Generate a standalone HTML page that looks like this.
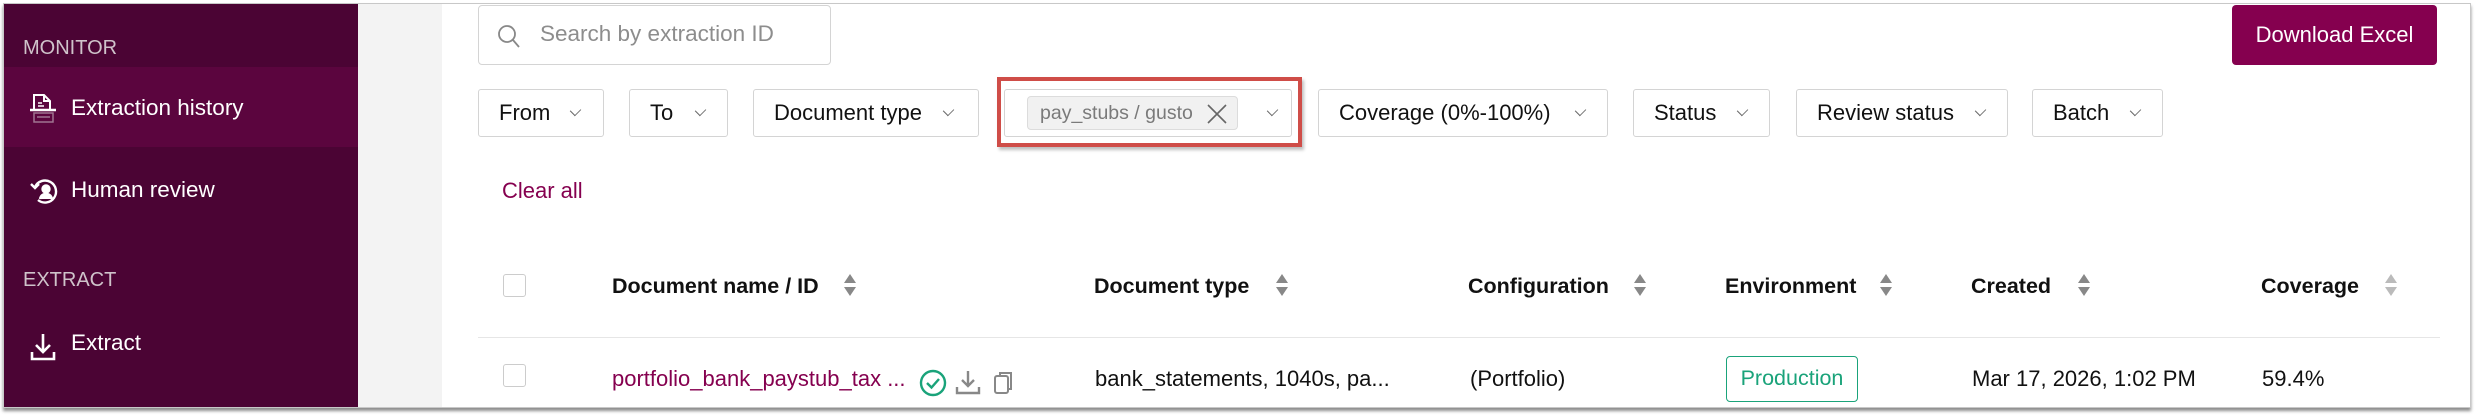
<!DOCTYPE html>
<html><head><meta charset="utf-8"><style>
*{box-sizing:border-box;margin:0;padding:0}
body{width:2477px;height:416px;background:#fff;position:relative;overflow:hidden;font-family:"Liberation Sans",Arial,sans-serif;color:#111}
.frame{position:absolute;left:3px;top:3px;width:2468px;height:405px;border:1px solid #c8c8c8;box-shadow:0 3px 3px rgba(0,0,0,.45);overflow:hidden;background:#fff}
.a{position:absolute;white-space:nowrap}
.side{position:absolute;left:0;top:0;width:354px;height:405px;background:#4b0434}
.act{position:absolute;left:0;top:63px;width:354px;height:80px;background:#5b053e}
.gap{position:absolute;left:354px;top:0;width:84px;height:405px;background:#f3f3f3}
.sec{color:#cfc3ca;font-size:20px}
.nav{color:#fff;font-size:22.5px}
.btn{position:absolute;height:48px;border:1px solid #d4d4d4;border-radius:3px;background:#fff;font-size:22px;line-height:46px;padding-left:20px}
.chev{position:absolute;top:16px;width:9px;height:9px;border-right:1.6px solid #666;border-bottom:1.6px solid #666;transform:rotate(45deg) scaleX(.8)}
.th{font-weight:bold;font-size:21.5px;top:270px}
.sort{position:absolute;top:269px;width:14px;height:24px}
.cb{position:absolute;width:23px;height:23px;border:1px solid #ccc;border-radius:3px;background:#fff}
.td{font-size:22px;top:362px}
</style></head><body>
<div class="frame">
<div class="side"></div>
<div class="act"></div>
<div class="gap"></div>
<div class="a sec" style="left:19px;top:33px">MONITOR</div>
<svg class="a" style="left:24px;top:89px" width="30" height="32" viewBox="0 0 30 32" fill="none" stroke="#fff" stroke-width="2"><path d="M6 16V2h10l6 6v8"/><path d="M16 2v6h6"/><path d="M10 10h4M10 13h6" stroke-width="1.5"/><path d="M2 17h26" stroke-width="2.5"/><rect x="6" y="20" width="19" height="9" stroke="#a07590" stroke-width="1.5"/><path d="M9 24h13" stroke="#a07590" stroke-width="1.5"/></svg>
<div class="a nav" style="left:67px;top:91px">Extraction history</div>
<svg class="a" style="left:24px;top:171px" width="32" height="32" viewBox="0 0 32 32" fill="none" stroke="#fff" stroke-width="2.4"><path d="M7 12A11 11 0 1 1 10 25"/><path d="M3 9l4 4 4-4"/><circle cx="18" cy="14" r="3.5" fill="#fff"/><path d="M12 24c1-4 3-5 6-5s5 1 6 5" fill="#fff"/></svg>
<div class="a nav" style="left:67px;top:173px">Human review</div>
<div class="a sec" style="left:19px;top:265px">EXTRACT</div>
<svg class="a" style="left:25px;top:328px" width="28" height="30" viewBox="0 0 28 30" fill="none" stroke="#fff" stroke-width="2.6"><path d="M14 2v18M7 13l7 7 7-7"/><path d="M3 20v7h22v-7"/></svg>
<div class="a nav" style="left:67px;top:326px">Extract</div>

<div class="a" style="left:474px;top:1px;width:353px;height:60px;border:1px solid #d4d4d4;border-radius:4px"></div>
<svg class="a" style="left:493px;top:20px" width="24" height="26" viewBox="0 0 24 26" fill="none" stroke="#888" stroke-width="1.8"><circle cx="10" cy="10" r="8"/><path d="M16 16l6 7"/></svg>
<div class="a" style="left:536px;top:17px;font-size:22.5px;color:#8d8d8d">Search by extraction ID</div>
<div class="a" style="left:2228px;top:1px;width:205px;height:60px;background:#85004f;border-radius:4px;color:#fff;font-size:22px;line-height:60px;text-align:center">Download Excel</div>

<div class="btn" style="left:474px;top:85px;width:126px">From<span class="chev" style="left:92px"></span></div>
<div class="btn" style="left:625px;top:85px;width:99px">To<span class="chev" style="left:66px"></span></div>
<div class="btn" style="left:749px;top:85px;width:226px">Document type<span class="chev" style="left:190px"></span></div>
<div class="a" style="left:993px;top:73px;width:305px;height:70px;border:4px solid #cf4d48;box-shadow:2px 3px 3px rgba(0,0,0,.25)"></div>
<div class="btn" style="left:1000px;top:85px;width:288px"><span class="chev" style="left:263px"></span></div>
<div class="a" style="left:1023px;top:92px;width:211px;height:34px;background:#f1f1f1;border:1px solid #dcdcdc;border-radius:4px;font-size:19.5px;color:#7a7a7a;line-height:32px;padding-left:12px">pay_stubs / gusto</div>
<svg class="a" style="left:1203px;top:100px" width="20" height="20" viewBox="0 0 20 20" stroke="#666" stroke-width="1.6"><path d="M1 1l18 18M19 1L1 19"/></svg>
<div class="btn" style="left:1314px;top:85px;width:290px">Coverage (0%-100%)<span class="chev" style="left:257px"></span></div>
<div class="btn" style="left:1629px;top:85px;width:137px">Status<span class="chev" style="left:104px"></span></div>
<div class="btn" style="left:1792px;top:85px;width:212px">Review status<span class="chev" style="left:179px"></span></div>
<div class="btn" style="left:2028px;top:85px;width:131px">Batch<span class="chev" style="left:98px"></span></div>

<div class="a" style="left:498px;top:174px;font-size:22px;color:#85004f">Clear all</div>

<div class="cb" style="left:499px;top:270px"></div>
<div class="a th" style="left:608px">Document name / ID</div>
<div class="a th" style="left:1090px">Document type</div>
<div class="a th" style="left:1464px">Configuration</div>
<div class="a th" style="left:1721px">Environment</div>
<div class="a th" style="left:1967px">Created</div>
<div class="a th" style="left:2257px">Coverage</div>
<svg class="sort" style="left:839px" viewBox="0 0 14 24"><path d="M7 1l6 9H1z M7 23l6-9H1z" fill="#888"/></svg>
<svg class="sort" style="left:1271px" viewBox="0 0 14 24"><path d="M7 1l6 9H1z M7 23l6-9H1z" fill="#888"/></svg>
<svg class="sort" style="left:1629px" viewBox="0 0 14 24"><path d="M7 1l6 9H1z M7 23l6-9H1z" fill="#888"/></svg>
<svg class="sort" style="left:1875px" viewBox="0 0 14 24"><path d="M7 1l6 9H1z M7 23l6-9H1z" fill="#888"/></svg>
<svg class="sort" style="left:2073px" viewBox="0 0 14 24"><path d="M7 1l6 9H1z M7 23l6-9H1z" fill="#888"/></svg>
<svg class="sort" style="left:2380px" viewBox="0 0 14 24"><path d="M7 1l6 9H1z M7 23l6-9H1z" fill="#bbb"/></svg>
<div class="a" style="left:474px;top:333px;width:1962px;height:1px;background:#e6e6e6"></div>

<div class="cb" style="left:499px;top:360px"></div>
<div class="a td" style="left:608px;color:#85004f">portfolio_bank_paystub_tax ...</div>
<svg class="a" style="left:915px;top:365px" width="28" height="28" viewBox="0 0 28 28" fill="none" stroke="#1aa37a" stroke-width="2.4"><circle cx="14" cy="14" r="12"/><path d="M8 14l4.5 4.5L20 10"/></svg>
<svg class="a" style="left:951px;top:366px" width="26" height="26" viewBox="0 0 26 26" fill="none" stroke="#888" stroke-width="2.4"><path d="M13 1v15M7 10l6 6 6-6"/><path d="M2 17v6h22v-6"/></svg>
<svg class="a" style="left:989px;top:366px" width="22" height="26" viewBox="0 0 22 26" fill="none" stroke="#888" stroke-width="2"><rect x="2" y="6" width="13" height="17" rx="2"/><path d="M7 5V3h11v16h-3"/></svg>
<div class="a td" style="left:1091px">bank_statements, 1040s, pa...</div>
<div class="a td" style="left:1466px">(Portfolio)</div>
<div class="a" style="left:1722px;top:352px;width:132px;height:46px;border:1.5px solid #1aa37a;border-radius:4px;color:#1aa37a;font-size:21.5px;line-height:43px;text-align:center">Production</div>
<div class="a td" style="left:1968px">Mar 17, 2026, 1:02 PM</div>
<div class="a td" style="left:2258px">59.4%</div>
</div>
</body></html>
